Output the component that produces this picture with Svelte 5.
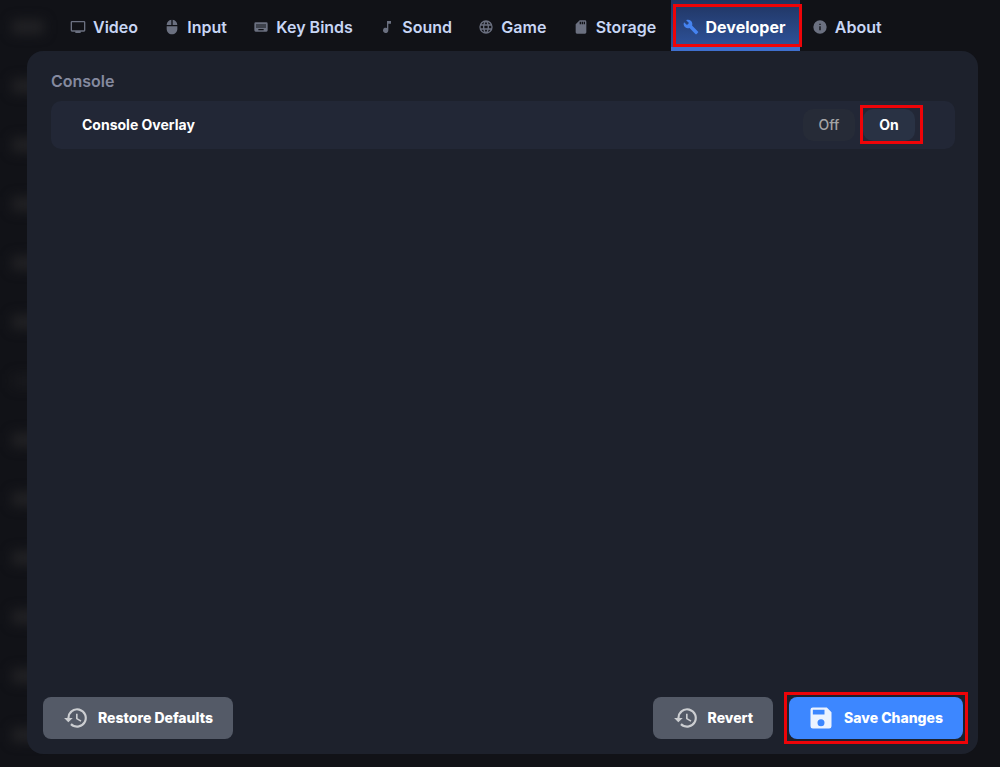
<script lang="ts">
  type Tab = { id: string; label: string; icon: string };

  const tabs: Tab[] = [
    {
      id: "video",
      label: "Video",
      icon: "M21 3H3a2 2 0 0 0-2 2v12a2 2 0 0 0 2 2h5v2h8v-2h5a2 2 0 0 0 2-2V5a2 2 0 0 0-2-2zm0 14H3V5h18z",
    },
    {
      id: "input",
      label: "Input",
      icon: "M13 1.1V9h7c0-4.100-3.100-7.400-7-7.900zM4 15c0 4.400 3.600 8 8 8s8-3.600 8-8v-4H4zM11 1.100C7.100 1.600 4 4.900 4 9h7z",
    },
    {
      id: "keys",
      label: "Key Binds",
      icon: "M20 5H4a2 2 0 0 0-2 2v10a2 2 0 0 0 2 2h16a2 2 0 0 0 2-2V7a2 2 0 0 0-2-2zm-9 3h2v2h-2zm0 3h2v2h-2zM8 8h2v2H8zm0 3h2v2H8zm-1 2H5v-2h2zm0-3H5V8h2zm9 7H8v-2h8zm0-4h-2v-2h2zm0-3h-2V8h2zm3 3h-2v-2h2zm0-3h-2V8h2z",
    },
    {
      id: "sound",
      label: "Sound",
      icon: "M12 3v10.550A4 4 0 1 0 14 17V7h4V3z",
    },
    {
      id: "game",
      label: "Game",
      icon: "M12 2a10 10 0 1 0 0 20 10 10 0 0 0 0-20zm6.930 6h-2.950a15.700 15.700 0 0 0-1.380-3.560A8 8 0 0 1 18.930 8zM12 4.040c.83 1.200 1.480 2.530 1.910 3.960h-3.820c.43-1.430 1.080-2.760 1.910-3.960zM4.260 14a8 8 0 0 1 0-4h3.380a16.500 16.500 0 0 0 0 4zm.81 2h2.950c.32 1.250.78 2.450 1.380 3.560A8 8 0 0 1 5.070 16zm2.950-8H5.070A8 8 0 0 1 9.400 4.440 15.700 15.700 0 0 0 8.020 8zM12 19.960A14 14 0 0 1 10.090 16h3.820A14 14 0 0 1 12 19.960zM14.340 14H9.660a14.700 14.700 0 0 1 0-4h4.680a14.600 14.600 0 0 1 0 4zm.25 5.560c.6-1.110 1.060-2.310 1.380-3.560h2.950a8 8 0 0 1-4.330 3.560zM16.360 14a16.500 16.500 0 0 0 0-4h3.380a8 8 0 0 1 0 4z",
    },
    {
      id: "storage",
      label: "Storage",
      icon: "M18 2h-8L4 8v12a2 2 0 0 0 2 2h12a2 2 0 0 0 2-2V4a2 2 0 0 0-2-2zm-6 6h-2V4h2zm3 0h-2V4h2zm3 0h-2V4h2z",
    },
    {
      id: "developer",
      label: "Developer",
      icon: "M22.700 19l-9.100-9.100c.9-2.300.4-5-1.500-6.900-2-2-5-2.400-7.400-1.300L9 6 6 9 1.600 4.700C.4 7.100.9 10.100 2.900 12.100c1.900 1.900 4.600 2.400 6.900 1.500l9.100 9.100c.4.4 1 .4 1.400 0l2.300-2.300c.5-.4.5-1.100.1-1.400z",
    },
    {
      id: "about",
      label: "About",
      icon: "M12 2a10 10 0 1 0 0 20 10 10 0 0 0 0-20zm1 15h-2v-6h2zm0-8h-2V7h2z",
    },
  ];

  const history =
    "M13 3a9 9 0 0 0-9 9H1l3.890 3.890.07.14L9 12H6a7 7 0 1 1 2.060 4.940l-1.420 1.420A9 9 0 1 0 13 3zm-1 5v5l4.280 2.540.72-1.210-3.500-2.080V8z";
  const save =
    "M17 3H5a2 2 0 0 0-2 2v14a2 2 0 0 0 2 2h14a2 2 0 0 0 2-2V7zm-5 16a3 3 0 1 1 0-6 3 3 0 0 1 0 6zm3-10H5V5h10z";

  const backdropRows = Array.from({ length: 13 }, (_, i) => i);

  let active = $state("developer");
  let overlay = $state("on");
</script>

{#snippet icon(path: string)}
  <svg viewBox="0 0 24 24" aria-hidden="true"><path d={path} /></svg>
{/snippet}

<div class="screen">
  <div class="backdrop" aria-hidden="true">
    {#each backdropRows as row (row)}
      <span class:faint={row === 6}></span>
    {/each}
  </div>

  <nav>
    {#each tabs as tab (tab.id)}
      <button
        class="tab"
        class:active={active === tab.id}
        class:marked={tab.id === "developer"}
        onclick={() => (active = tab.id)}
      >
        {@render icon(tab.icon)}
        {tab.label}
      </button>
    {/each}
  </nav>

  <main>
    <section>
      <h2>Console</h2>
      <div class="setting" role="radiogroup" aria-labelledby="overlay-label">
        <span id="overlay-label">Console Overlay</span>
        <div class="options">
          <label>
            <input type="radio" name="overlay" value="off" bind:group={overlay} />
            Off
          </label>
          <label class="marked">
            <input type="radio" name="overlay" value="on" bind:group={overlay} />
            On
          </label>
        </div>
      </div>
    </section>

    <footer>
      <button class="action restore">{@render icon(history)}Restore Defaults</button>
      <button class="action">{@render icon(history)}Revert</button>
      <button class="action primary marked">{@render icon(save)}Save Changes</button>
    </footer>
  </main>
</div>

<style>
  :global(body) {
    margin: 0;
    background: #111217;
  }

  .screen {
    position: relative;
    box-sizing: border-box;
    min-height: 100vh;
    display: flex;
    flex-direction: column;
    padding: 0 22px 13px 27px;
    overflow: hidden;
    background: #111217;
    font-family: Inter, "Open Sans", sans-serif;
    font-size: 14px;
    line-height: 20px;
  }

  .backdrop {
    position: absolute;
    top: 20px;
    left: 12px;
    display: flex;
    flex-direction: column;
    gap: 45px;
    filter: blur(6px);

    span {
      width: 32px;
      height: 14px;
      background: #222225;
    }

    .faint {
      opacity: 0.4;
    }
  }

  button {
    border: 0;
    font: inherit;
    cursor: pointer;
  }

  svg {
    flex: none;
    fill: currentColor;
  }

  nav {
    position: relative;
    display: flex;
    height: 51px;
    padding: 0 82px 0 31px;
  }

  .tab {
    position: relative;
    flex: 1 0 auto;
    display: flex;
    align-items: center;
    gap: 7px;
    padding: 2px 12px 0;
    background: none;
    color: #c8d6f5;
    font-size: 16px;
    font-weight: 600;
    white-space: nowrap;

    svg {
      width: 16px;
      height: 16px;
      color: #6b7080;
    }

    &.active {
      background: linear-gradient(#203460, #2f559f);
      box-shadow: inset 0 -4px #3f70cf;
      color: #fff;
      font-weight: 700;
    }

    &.active svg {
      color: #4583f0;
    }
  }

  .marked {
    position: relative;
  }

  /* red callout frames drawn over the controls */
  .marked::after {
    content: "";
    position: absolute;
    inset: -5px;
    border: 3px solid #ee0408;
    pointer-events: none;
  }

  .tab.marked::after {
    inset: 4px -2px 4px 2px;
  }

  main {
    position: relative;
    flex: 1;
    display: flex;
    flex-direction: column;
    justify-content: space-between;
    border-radius: 16px;
    background: #1d212c;
  }

  section {
    padding: 20px 23px 0 24px;
  }

  h2 {
    margin: 0 0 10px;
    color: #858a9f;
    font-size: 16px;
    font-weight: 600;
    line-height: 20px;
  }

  .setting {
    display: flex;
    align-items: center;
    justify-content: space-between;
    height: 48px;
    padding: 0 40px 0 31px;
    border-radius: 10px;
    background: #222736;
    color: #fff;
    font-weight: 700;
  }

  .options {
    display: flex;
    gap: 8px;
  }

  label {
    display: flex;
    align-items: center;
    justify-content: center;
    width: 52px;
    height: 32px;
    border-radius: 10px;
    background: #262b37;
    color: #a5a5a6;
    font-weight: 500;
    cursor: pointer;

    &:has(input:checked) {
      background: #293244;
      color: #fff;
      font-weight: 700;
    }

    &.marked::after {
      inset: -4px -8px -3px -3px;
    }
  }

  input {
    position: absolute;
    opacity: 0;
    pointer-events: none;
  }

  footer {
    display: flex;
    gap: 16px;
    padding: 0 15px 15px 16px;
  }

  .action {
    display: flex;
    align-items: center;
    gap: 9px;
    height: 42px;
    padding: 0 20px;
    border-radius: 8px;
    background: #545a67;
    color: #fff;
    font-weight: 800;
    white-space: nowrap;

    svg {
      width: 26px;
      height: 26px;
      opacity: 0.7;
    }
  }

  .restore {
    margin-right: auto;
  }

  .primary {
    padding: 0 20px 0 18px;
    background: #3d87ff;

    svg {
      width: 28px;
      height: 28px;
      opacity: 0.9;
    }
  }
</style>
